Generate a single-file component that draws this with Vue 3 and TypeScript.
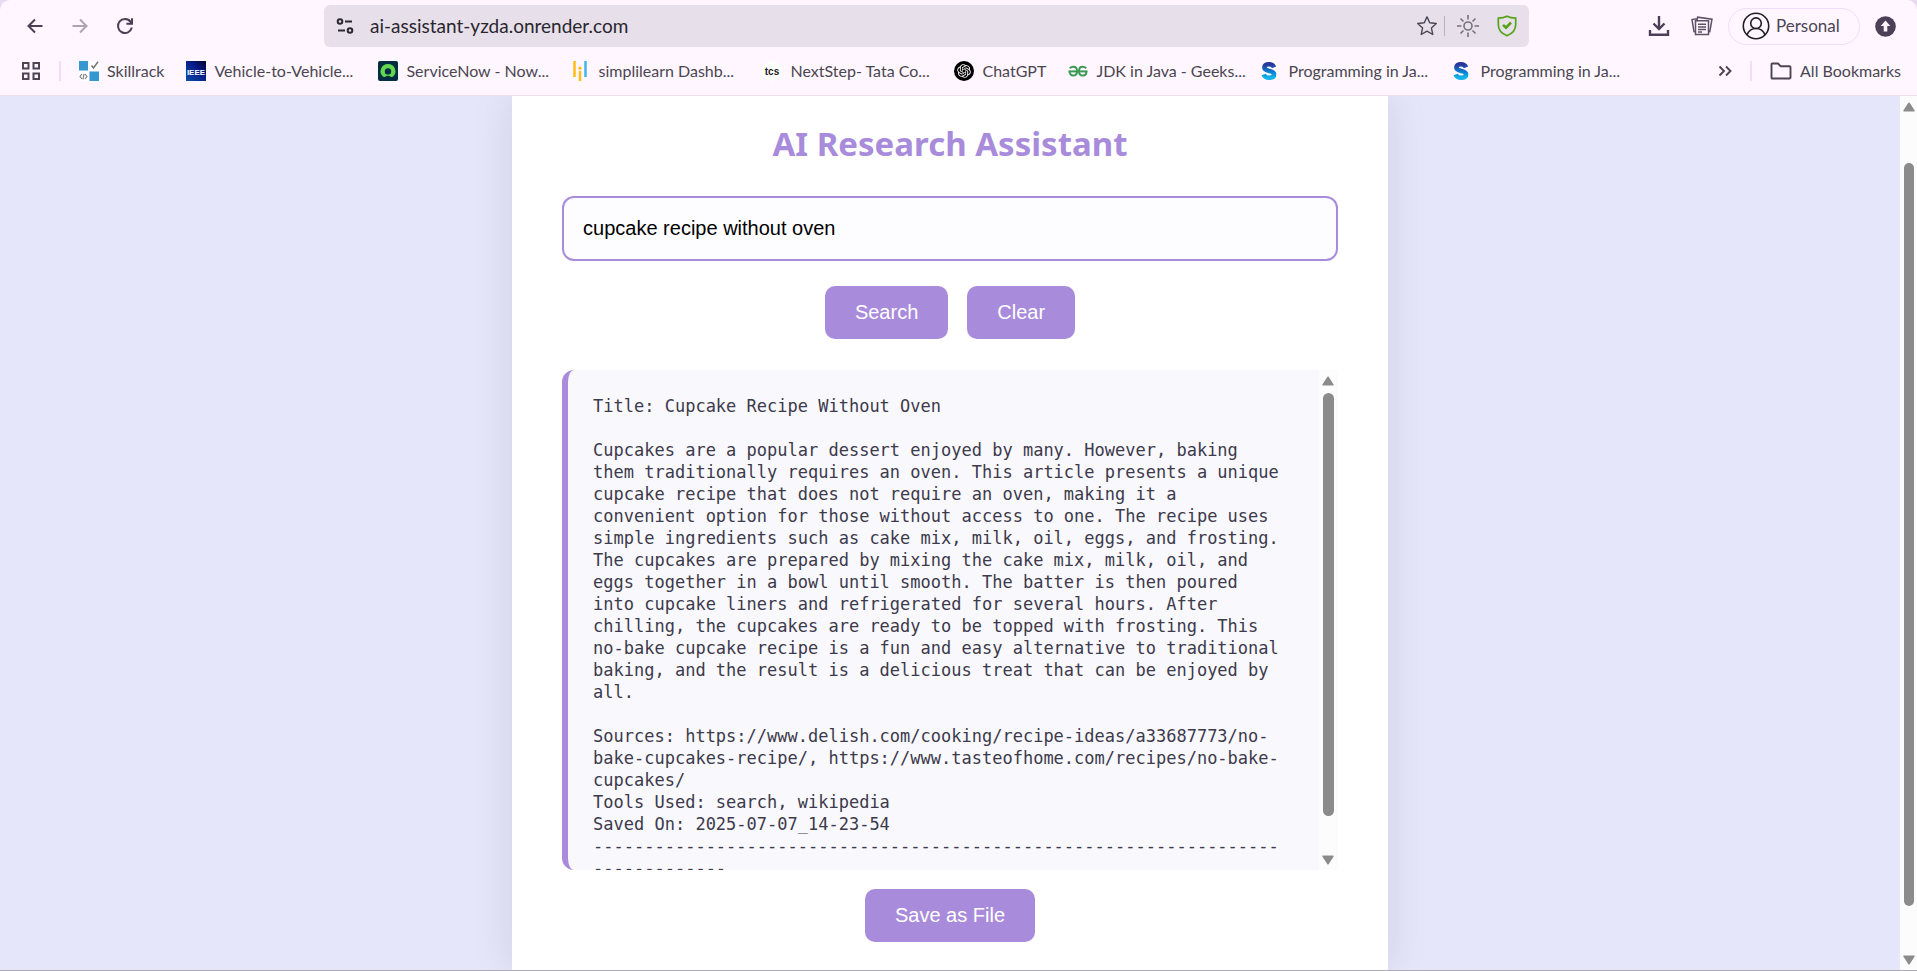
<script setup lang="ts">
import { ref } from 'vue'

interface Bookmark {
  label: string
  icon: 'skillrack' | 'ieee' | 'servicenow' | 'simplilearn' | 'tcs' | 'chatgpt' | 'gfg' | 'scaler'
  wide: boolean
}

const bookmarks: Bookmark[] = [
  { label: 'Skillrack', icon: 'skillrack', wide: false },
  { label: 'Vehicle-to-Vehicle...', icon: 'ieee', wide: true },
  { label: 'ServiceNow - Now...', icon: 'servicenow', wide: true },
  { label: 'simplilearn Dashb...', icon: 'simplilearn', wide: true },
  { label: 'NextStep- Tata Co...', icon: 'tcs', wide: true },
  { label: 'ChatGPT', icon: 'chatgpt', wide: false },
  { label: 'JDK in Java - Geeks...', icon: 'gfg', wide: true },
  { label: 'Programming in Ja...', icon: 'scaler', wide: true },
  { label: 'Programming in Ja...', icon: 'scaler', wide: true },
]

const address = ref('ai-assistant-yzda.onrender.com')
const query = ref('cupcake recipe without oven')

const result = ref(
  [
    'Title: Cupcake Recipe Without Oven',
    '',
    'Cupcakes are a popular dessert enjoyed by many. However, baking them traditionally requires an oven. This article presents a unique cupcake recipe that does not require an oven, making it a convenient option for those without access to one. The recipe uses simple ingredients such as cake mix, milk, oil, eggs, and frosting. The cupcakes are prepared by mixing the cake mix, milk, oil, and eggs together in a bowl until smooth. The batter is then poured into cupcake liners and refrigerated for several hours. After chilling, the cupcakes are ready to be topped with frosting. This no-bake cupcake recipe is a fun and easy alternative to traditional baking, and the result is a delicious treat that can be enjoyed by all.',
    '',
    'Sources: https://www.delish.com/cooking/recipe-ideas/a33687773/no-bake-cupcakes-recipe/, https://www.tasteofhome.com/recipes/no-bake-cupcakes/',
    'Tools Used: search, wikipedia',
    'Saved On: 2025-07-07_14-23-54',
    '-'.repeat(80),
  ].join('\n'),
)

function clearAll(): void {
  query.value = ''
  result.value = ''
}
</script>

<template>
  <div class="window">
    <header class="chrome">
      <div class="toolbar">
        <div class="nav">
          <button class="icon-btn" aria-label="Back">
            <svg width="20" height="20" viewBox="0 0 20 20" fill="none" stroke="#4a3f54" stroke-width="2"><path d="M17.5 10H3.5M10 3.5 3.5 10l6.5 6.5" /></svg>
          </button>
          <button class="icon-btn" aria-label="Forward">
            <svg width="20" height="20" viewBox="0 0 20 20" fill="none" stroke="#aca3b1" stroke-width="2"><path d="M2.5 10h14M10 3.5l6.5 6.5-6.5 6.5" /></svg>
          </button>
          <button class="icon-btn" aria-label="Reload">
            <svg width="20" height="20" viewBox="0 0 20 20" fill="none" stroke="#4a3f54" stroke-width="2"><path d="M16.8 11.5A7 7 0 1 1 15.6 5.8L17 7.6" /><path d="M17 2.2v5.6h-5.6" /></svg>
          </button>
        </div>
        <div class="omnibox">
          <svg width="18" height="18" viewBox="0 0 18 18" fill="none" stroke="#2b2730" stroke-width="2"><circle cx="4" cy="4.5" r="2.3" /><path d="M9 4.5h7M2 13.5h7" /><circle cx="14" cy="13.5" r="2.3" /></svg>
          <input v-model="address" class="address" type="text" aria-label="Address" />
          <button class="icon-btn" aria-label="Bookmark this page">
            <svg width="22" height="22" viewBox="0 0 22 22" fill="none" stroke="#4c4752" stroke-width="1.4" stroke-linejoin="round"><path d="m11 1.8 2.7 6 6.6.7-4.9 4.4 1.4 6.6-5.8-3.4-5.8 3.4 1.4-6.6-4.9-4.4 6.6-.7z" /></svg>
          </button>
          <span class="omni-sep"></span>
          <button class="icon-btn sun" aria-label="Brightness">
            <svg width="22" height="22" viewBox="0 0 22 22" fill="none" stroke="#77727c" stroke-width="1.6"><circle cx="11" cy="11" r="4" /><path d="M11 0v4.5M11 17.5V22M0 11h4.5M17.5 11H22M3.5 3.5l3 3M15.5 15.5l3 3M3.5 18.5l3-3M15.5 6.5l3-3" /></svg>
          </button>
          <button class="icon-btn" aria-label="Site protection">
            <svg width="20" height="22" viewBox="0 0 20 22" fill="none" stroke="#55a318" stroke-width="1.7"><path d="M10 1.3C7.5 2.7 4.5 3.2 1.3 3.2v6.3c0 5.5 3.6 9.2 8.7 11.2 5.1-2 8.7-5.7 8.7-11.2V3.2C15.5 3.2 12.5 2.7 10 1.3z" /><path d="m6 10 3 2.6L14 7.5" stroke-width="2.6" /></svg>
          </button>
        </div>
        <div class="actions">
          <button class="icon-btn" aria-label="Downloads">
            <svg width="22" height="22" viewBox="0 0 22 22" fill="none" stroke="#4c3f58" stroke-width="2.4"><path d="M11 1v12M5.5 8.5 11 14l5.5-5.5M2 15v4.7h18V15" /></svg>
          </button>
          <button class="icon-btn" aria-label="Collections">
            <svg width="22" height="20" viewBox="0 0 22 20" fill="none" stroke="#5c5166" stroke-width="1.5"><path d="M5.500 16 3 15.600 1 3.500l5-.800M6 4.500 6.600 1.200 21 3.200l-2.200 12.500-1.500-.200" /><path d="M4.500 4.800h13V18.500h-13z" fill="#fff6ff" /><path d="M7 8.300h8M7 11h8M7 13.500h8M7 16h4" /></svg>
          </button>
          <button class="profile">
            <svg width="28" height="28" viewBox="0 0 28 28" fill="none" stroke="#1f1d22" stroke-width="1.6"><circle cx="14" cy="14" r="12.7" /><circle cx="14" cy="11.2" r="5.3" /><path d="M5 23c1.500-4 4.800-6.500 9-6.500s7.500 2.500 9 6.500" /></svg>
            Personal
          </button>
          <button class="icon-btn" aria-label="Update">
            <svg width="21" height="21" viewBox="0 0 21 21"><circle cx="10.5" cy="10.5" r="10.3" fill="#4c3f58" /><path d="M10.500 4.500 5.700 10h3v5.500h3.600V10h3z" fill="#fff6ff" /></svg>
          </button>
        </div>
      </div>

      <nav class="bookmarks" aria-label="Bookmarks">
        <button class="icon-btn" aria-label="Apps">
          <svg width="20" height="20" viewBox="0 0 20 20" fill="none" stroke="#4b4553" stroke-width="2"><path d="M2 2h5.500v5.500H2zM12.500 2H18v5.500h-5.500zM2 12.500h5.500V18H2zM12.500 12.500H18V18h-5.500z" /></svg>
        </button>
        <span class="bar-sep"></span>
        <a v-for="(b, i) in bookmarks" :key="i" href="#" class="bookmark">
          <svg class="fav" viewBox="0 0 20 20" aria-hidden="true">
            <template v-if="b.icon === 'skillrack'">
              <path d="M0 0h9v9.500H0zM10.500 10.500H20V20h-9.500z" fill="#3498cf" />
              <path d="M0 10.500h9V20H0zM10.500 0H20v9.500h-9.500z" fill="#fff" />
              <path d="m12.500 4.500 2 2.500L19 .8" fill="none" stroke="#777" stroke-width="1.5" />
              <path d="M3 13 1 15.500 3 18M6 13l2 2.500L6 18M5 12.800 4 18.300" fill="none" stroke="#777" stroke-width="1.1" />
            </template>
            <template v-else-if="b.icon === 'ieee'">
              <defs>
                <linearGradient id="ieeeFill" x1="0" y1="1" x2="1" y2="0"><stop offset="0" stop-color="#0a4da8" /><stop offset=".6" stop-color="#071a86" /><stop offset="1" stop-color="#02042c" /></linearGradient>
              </defs>
              <path d="M0 0h20v20H0z" fill="url(#ieeeFill)" />
              <text x="10" y="13.500" text-anchor="middle" class="ieee">IEEE</text>
            </template>
            <template v-else-if="b.icon === 'servicenow'">
              <rect width="20" height="20" rx="2" fill="#032d42" />
              <path d="M10 3a7.300 7.300 0 0 0-5.100 12.600c.6.600 1.600.700 2.300.1a4.600 4.600 0 0 1 5.600 0c.7.600 1.700.500 2.300-.1A7.300 7.300 0 0 0 10 3zm0 10.600a3.200 3.200 0 1 1 0-6.400 3.200 3.200 0 0 1 0 6.400z" fill="#62d84e" />
            </template>
            <template v-else-if="b.icon === 'simplilearn'">
              <path d="M4.500 0v16M10 10v10" stroke="#fdbf14" stroke-width="2.5" />
              <circle cx="10" cy="7.200" r="1.600" fill="#fdbf14" />
              <path d="M15.500 0v16" stroke="#3fb4ee" stroke-width="2.5" />
            </template>
            <template v-else-if="b.icon === 'tcs'">
              <circle cx="10" cy="10" r="10" fill="#fff" />
              <text x="10" y="13.500" text-anchor="middle" class="tcs">tcs</text>
            </template>
            <template v-else-if="b.icon === 'chatgpt'">
              <circle cx="10" cy="10" r="10" fill="#000" />
              <path transform="translate(3.200 3.200) scale(.567)" fill="#fff" d="M22.2819 9.8211a5.9847 5.9847 0 0 0-.5157-4.9108 6.0462 6.0462 0 0 0-6.5098-2.9A6.0651 6.0651 0 0 0 4.9807 4.1818a5.9847 5.9847 0 0 0-3.9977 2.9 6.0462 6.0462 0 0 0 .7427 7.0966 5.98 5.98 0 0 0 .511 4.9107 6.051 6.051 0 0 0 6.5146 2.9001A5.9847 5.9847 0 0 0 13.2599 24a6.0557 6.0557 0 0 0 5.7718-4.2058 5.9894 5.9894 0 0 0 3.9977-2.9001 6.0557 6.0557 0 0 0-.7475-7.0729zm-9.022 12.6081a4.4755 4.4755 0 0 1-2.8764-1.0408l.1419-.0804 4.7783-2.7582a.7948.7948 0 0 0 .3927-.6813v-6.7369l2.02 1.1686a.071.071 0 0 1 .038.052v5.5826a4.504 4.504 0 0 1-4.4945 4.4944zm-9.6607-4.1254a4.4708 4.4708 0 0 1-.5346-3.0137l.142.0852 4.783 2.7582a.7712.7712 0 0 0 .7806 0l5.8428-3.3685v2.3324a.0804.0804 0 0 1-.0332.0615L9.74 19.9502a4.4992 4.4992 0 0 1-6.1408-1.6464zM2.3408 7.8956a4.485 4.485 0 0 1 2.3655-1.9728V11.6a.7664.7664 0 0 0 .3879.6765l5.8144 3.3543-2.0201 1.1685a.0757.0757 0 0 1-.071 0l-4.8303-2.7865A4.504 4.504 0 0 1 2.3408 7.872zm16.5963 3.8558L13.1038 8.364 15.1192 7.2a.0757.0757 0 0 1 .071 0l4.8303 2.7913a4.4944 4.4944 0 0 1-.6765 8.1042v-5.6772a.79.79 0 0 0-.407-.667zm2.0107-3.0231l-.142-.0852-4.7735-2.7818a.7759.7759 0 0 0-.7854 0L9.409 9.2297V6.8974a.0662.0662 0 0 1 .0284-.0615l4.8303-2.7866a4.4992 4.4992 0 0 1 6.6802 4.66zM8.3065 12.863l-2.02-1.1638a.0804.0804 0 0 1-.038-.0567V6.0742a4.4992 4.4992 0 0 1 7.3757-3.4537l-.142.0805L8.704 5.459a.7948.7948 0 0 0-.3927.6813zm1.0976-2.3654l2.602-1.4998 2.6069 1.4998v2.9994l-2.5974 1.4997-2.6067-1.4997Z" />
            </template>
            <template v-else-if="b.icon === 'gfg'">
              <g fill="none" stroke="#3c9a55" stroke-width="2">
                <path d="M1.800 7.200C3 6 4.200 5.800 5.300 5.800c2.300 0 3.700 2 3.700 4.400s-1.400 4.400-3.900 4.400c-2.200 0-3.500-1.700-3.500-4.300" />
                <path d="M18.200 7.200C17 6 15.800 5.800 14.700 5.800c-2.300 0-3.700 2-3.700 4.400s1.400 4.400 3.900 4.400c2.200 0 3.500-1.700 3.500-4.300" />
                <path d="M.5 10.400h19" />
              </g>
            </template>
            <template v-else>
              <defs>
                <linearGradient id="sFill" x1="0" y1="0" x2="0" y2="1"><stop offset="0" stop-color="#28359a" /><stop offset=".55" stop-color="#0a7fd0" /><stop offset="1" stop-color="#12b5ea" /></linearGradient>
              </defs>
              <path d="M14 6.300C13 3.800 11 3.200 9.200 3.200 6.200 3.200 4.400 4.500 4.400 6.500c0 4.700 9.700 2.200 9.700 6.800 0 2.300-2 3.500-5 3.500-2.300 0-4.500-.8-5.500-3.300" fill="none" stroke="url(#sFill)" stroke-width="4.6" />
            </template>
          </svg>
          <span :class="{ wide: b.wide }">{{ b.label }}</span>
        </a>
        <div class="bookmarks-end">
          <button class="icon-btn" aria-label="More bookmarks">
            <svg width="14" height="12" viewBox="0 0 14 12" fill="none" stroke="#4b4553" stroke-width="1.9"><path d="m1.500 1.500 4.500 4.500-4.500 4.500M8 1.500 12.500 6 8 10.500" /></svg>
          </button>
          <span class="bar-sep"></span>
          <a href="#" class="bookmark">
            <svg width="22" height="18" viewBox="0 0 22 18" fill="none" stroke="#4b4553" stroke-width="1.9" stroke-linejoin="round"><path d="M1.500 15.500v-13q0-1 1-1h5.500l2.500 2.700h9q1 0 1 1v10.300q0 1-1 1h-17q-1 0-1-1z" /></svg>
            <span>All Bookmarks</span>
          </a>
        </div>
      </nav>
    </header>

    <div class="viewport">
      <main class="page">
        <section class="card">
          <h1>AI Research Assistant</h1>
          <input v-model="query" class="query" type="text" aria-label="Research query" />
          <div class="row">
            <button class="btn">Search</button>
            <button class="btn" @click="clearAll">Clear</button>
          </div>
          <div class="result">
            <pre>{{ result }}</pre>
            <div class="scroll" aria-hidden="true">
              <svg class="arrow" width="12" height="10" viewBox="0 0 12 10"><path d="M6 1.200 11 8.800H1z" /></svg>
              <div class="track"><div class="thumb inner-thumb"></div></div>
              <svg class="arrow" width="12" height="10" viewBox="0 0 12 10"><path d="M6 8.800 1 1.200h10z" /></svg>
            </div>
          </div>
          <div class="save"><button class="btn">Save as File</button></div>
        </section>
      </main>
      <div class="scroll page-scroll" aria-hidden="true">
        <svg class="arrow" width="12" height="10" viewBox="0 0 12 10"><path d="M6 1.200 11 8.800H1z" /></svg>
        <div class="track"><div class="thumb page-thumb"></div></div>
        <svg class="arrow" width="12" height="10" viewBox="0 0 12 10"><path d="M6 8.800 1 1.200h10z" /></svg>
      </div>
    </div>
  </div>
</template>

<style>
body {
  margin: 0;
  background: #e8daf0;
}
</style>

<style scoped>
* {
  box-sizing: border-box;
}

.window {
  display: flex;
  flex-direction: column;
  height: 100vh;
  overflow: hidden;
  border-bottom: 1px solid #acaab4;
  font-family: Lato, "Liberation Sans", sans-serif;
}

.chrome {
  flex: none;
  height: 96px;
  background: #fff6ff;
  border-bottom: 1px solid #eddde9;
  border-radius: 10px 10px 0 0;
}

.toolbar {
  display: flex;
  align-items: center;
  height: 52px;
  padding: 0 21px 0 25px;
}

.icon-btn {
  display: flex;
  align-items: center;
  justify-content: center;
  padding: 0;
  border: 0;
  background: none;
}

.nav {
  display: flex;
  gap: 25px;
  width: 299px;
}

.omnibox {
  display: flex;
  flex: 1;
  align-items: center;
  height: 42px;
  padding: 0 12px;
  border-radius: 6px;
  background: #e7e0ea;
}

.address {
  flex: 1;
  min-width: 0;
  margin-left: 16px;
  padding: 0;
  border: 0;
  outline: 0;
  background: none;
  color: #2a262e;
  font: 19px/24px Lato, "Liberation Sans", sans-serif;
}

.omni-sep {
  width: 1px;
  height: 20px;
  margin: 0 12px 0 6px;
  background: #b9b3be;
}

.sun {
  margin-right: 18px;
}

.actions {
  display: flex;
  align-items: center;
  justify-content: flex-end;
  gap: 21px;
  width: 367px;
}

.profile {
  display: flex;
  align-items: center;
  gap: 6px;
  width: 132px;
  height: 37px;
  margin: 0 -6px;
  padding: 0 0 0 13px;
  border: 1px solid #efdcf6;
  border-radius: 19px;
  background: none;
  color: #4c4554;
  font: 17px/20px Lato, "Liberation Sans", sans-serif;
}

.bookmarks {
  display: flex;
  align-items: center;
  height: 38px;
  padding: 0 16px 0 21px;
}

.bar-sep {
  width: 2px;
  height: 20px;
  margin: 0 18px;
  background: #f1dcfa;
}

.bookmark {
  display: flex;
  align-items: center;
  gap: 8px;
  margin-right: 22px;
  color: #4a4650;
  font-size: 16px;
  line-height: 20px;
  text-decoration: none;
  white-space: nowrap;
}

.wide {
  width: 142px;
}

.fav {
  width: 20px;
  height: 20px;
}

.ieee {
  fill: #fff;
  font: bold 8px "Liberation Sans", sans-serif;
}

.tcs {
  fill: #222;
  font: bold 10px "Liberation Sans", sans-serif;
}

.bookmarks-end {
  display: flex;
  align-items: center;
  margin-left: auto;
}

.bookmarks-end .bookmark {
  margin-right: 0;
}

.viewport {
  display: flex;
  flex: 1;
  min-height: 0;
}

.page {
  flex: 1;
  display: flex;
  justify-content: center;
  overflow: hidden;
  background: #e5e6fa;
}

.card {
  width: 46.1%;
  min-width: 600px;
  padding: 23px 50px 28px;
  background: #fff;
  box-shadow: 0 0 40px rgba(0, 0, 0, 0.1);
}

h1 {
  margin: 0 0 27px;
  color: #a98bdb;
  font: bold 33px/50px "Noto Sans", "Open Sans", sans-serif;
  text-align: center;
}

.query {
  display: block;
  width: 100%;
  height: 65px;
  padding: 0 19px;
  border: 2px solid #a98bdb;
  border-radius: 12px;
  outline: 0;
  background: #fdfdff;
  color: #000;
  font: 20px/24px "Liberation Sans", Arial, sans-serif;
}

.row {
  display: flex;
  justify-content: center;
  gap: 19px;
  margin: 25px 0 31px;
}

.btn {
  height: 53px;
  padding: 0 30px 2px;
  border: 0;
  border-radius: 10px;
  background: #a98bdb;
  color: #fff;
  font: 20px/24px "Liberation Sans", Arial, sans-serif;
}

.result {
  display: flex;
  height: 500px;
  overflow: hidden;
  border-left: 6px solid #a98bdb;
  border-radius: 12px 0 0 12px;
  background: #f8f8fd;
}

pre {
  flex: 1;
  min-width: 0;
  margin: 0;
  padding: 25px 30px 0 25px;
  color: #3d3a4b;
  font: 17px/22px "DejaVu Sans Mono", monospace;
  white-space: pre-wrap;
  overflow-wrap: break-word;
}

.scroll {
  display: flex;
  flex-direction: column;
  align-items: center;
  width: 19px;
  padding: 6px 0 5px;
  background: #fcfcfc;
}

.arrow {
  flex: none;
  fill: #8b8b8b;
  stroke: #8b8b8b;
  stroke-width: 1.5;
  stroke-linejoin: round;
}

.track {
  flex: 1;
  padding: 7px 0;
}

.thumb {
  width: 11px;
  border-radius: 6px;
  background: #8b8b8b;
}

.inner-thumb {
  height: 93%;
}

.page-scroll {
  width: 17px;
}

.page-scroll .track {
  padding: 51px 0 49px;
}

.page-thumb {
  width: 10px;
  height: 100%;
}

.save {
  display: flex;
  justify-content: center;
  margin-top: 19px;
}
</style>
